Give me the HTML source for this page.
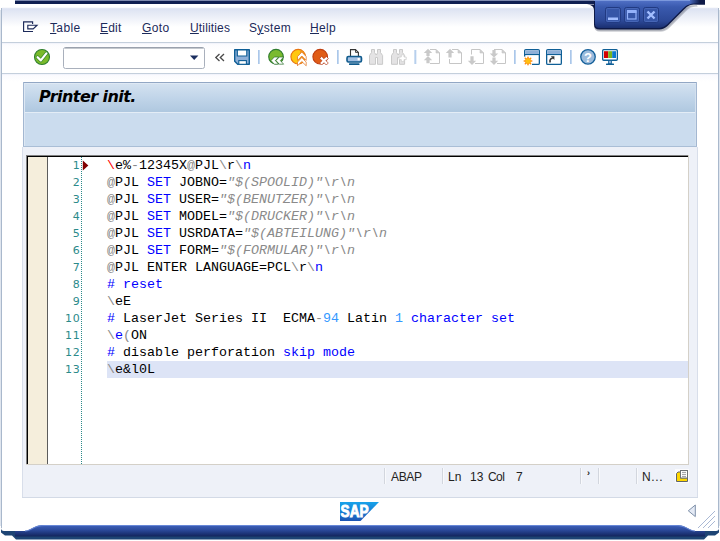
<!DOCTYPE html>
<html>
<head>
<meta charset="utf-8">
<title>Printer init.</title>
<style>
html,body{margin:0;padding:0;background:#fff;}
body{width:720px;height:541px;position:relative;overflow:hidden;font-family:"Liberation Sans",sans-serif;}
.abs{position:absolute;}
#frame{position:absolute;left:0;top:0;width:720px;height:541px;}
.menu{position:absolute;top:20px;height:16px;line-height:16px;font-size:12px;letter-spacing:0.35px;color:#1c2a5a;white-space:nowrap;}
.menu u{text-decoration:underline;text-decoration-thickness:1px;text-underline-offset:0.6px;}
#title{position:absolute;left:39px;top:86px;height:22px;line-height:22px;font-family:"DejaVu Sans","Liberation Sans",sans-serif;font-weight:bold;font-style:italic;font-size:16px;letter-spacing:-0.55px;color:#000;white-space:nowrap;}
#code{position:absolute;left:107px;top:157px;font-family:"Liberation Mono",monospace;font-size:13.333px;line-height:17px;color:#000;white-space:pre;}
#code div{height:17px;}
.g{color:#8a8a8a;}
.b{color:#0000ff;}
.r{color:#ff0000;}
.n{color:#3399ff;}
.s{color:#8a8a8a;font-style:italic;}
#lnum{position:absolute;left:48px;top:157px;width:32.400px;letter-spacing:0.7px;text-align:right;font-family:"DejaVu Sans","Liberation Sans",sans-serif;font-size:11px;line-height:17px;color:#2b8a8a;}
#lnum div{height:17px;}
.st{position:absolute;top:469px;height:16px;line-height:16px;font-size:12px;color:#222;white-space:nowrap;}
.sep{position:absolute;top:468px;width:1px;height:16px;background:#d2d6de;border-right:1px solid #f8f9fc;}
</style>
</head>
<body>
<svg id="frame" width="720" height="541" viewBox="0 0 720 541">
  <defs>
    <linearGradient id="topg" x1="0" y1="0" x2="0" y2="1">
      <stop offset="0" stop-color="#ffffff"/>
      <stop offset="0.10" stop-color="#ffffff"/>
      <stop offset="0.17" stop-color="#dce2f2"/>
      <stop offset="0.30" stop-color="#e2e7f4"/>
      <stop offset="1" stop-color="#ffffff"/>
    </linearGradient>
    <linearGradient id="tabg" x1="0" y1="0" x2="0" y2="1">
      <stop offset="0" stop-color="#5272c8"/>
      <stop offset="0.25" stop-color="#3a5aae"/>
      <stop offset="0.75" stop-color="#2c4896"/>
      <stop offset="1" stop-color="#1a2f70"/>
    </linearGradient>
    <linearGradient id="fadeg" x1="0" y1="0" x2="1" y2="0">
      <stop offset="0" stop-color="#0e1a48" stop-opacity="0"/>
      <stop offset="0.25" stop-color="#0e1a48" stop-opacity="0"/>
      <stop offset="0.75" stop-color="#0e1a48" stop-opacity="1"/>
      <stop offset="1" stop-color="#0e1a48" stop-opacity="1"/>
    </linearGradient>
    <linearGradient id="barg" x1="0" y1="0" x2="0" y2="1">
      <stop offset="0" stop-color="#4668c0"/>
      <stop offset="0.15" stop-color="#3c5eb6"/>
      <stop offset="0.45" stop-color="#2d4c9e"/>
      <stop offset="0.8" stop-color="#1b3274"/>
      <stop offset="1" stop-color="#13245a"/>
    </linearGradient>
    <linearGradient id="tbg" x1="0" y1="0" x2="0" y2="1">
      <stop offset="0" stop-color="#eef0fa"/>
      <stop offset="0.2" stop-color="#fbfbfe"/>
      <stop offset="1" stop-color="#ffffff"/>
    </linearGradient>
  </defs>
  <!-- top navy bar -->
  <rect x="15" y="0" width="690" height="4.500" fill="#0f1f52"/>
  <rect x="15" y="0" width="690" height="1" fill="#7f8bb0"/>
  <!-- bottom shadow -->
  <path d="M1 528 L1 532.500 L5 535.500 L12 535.500 L16 539.500 L704 539.500 L708 535.500 L715 535.500 L719 532.500 L719 528 Z" fill="#1d4474"/>
  <!-- bottom blue bar -->
  <rect x="15" y="524" width="690" height="12.500" fill="url(#barg)"/>
  <!-- window body -->
  <path d="M1 9 Q1 4 6 4 L714 4 Q719 4 719 9 L719 528 Q719 531 716 531 L697 531 C688 531 688 525 676 525 L44 525 C32 525 32 531 23 531 L4 531 Q1 531 1 528 Z" fill="#ffffff"/>
  <rect x="2" y="5" width="716" height="22" fill="url(#topg)"/>
  <path d="M25 531 C33 530.500 33 525.500 45 525.500 L675 525.500 C687 525.500 687 530.500 695 531" fill="none" stroke="#6c8cda" stroke-width="1" opacity="0.900"/>
  <!-- window side borders -->
  <rect x="1" y="8" width="1" height="520" fill="#a9b8cc"/>
  <rect x="0" y="10" width="1" height="516" fill="#dfe5ee"/>
  <rect x="718" y="8" width="1" height="520" fill="#a9b8cc"/>
  <rect x="719" y="10" width="1" height="516" fill="#dfe5ee"/>
  <!-- menu / toolbar separators -->
  <rect x="2" y="42" width="716" height="1" fill="#c4cfdc"/>
  <rect x="2" y="43" width="716" height="8" fill="url(#tbg)"/>
  <rect x="2" y="73" width="716" height="1" fill="#c4cfdc"/>
  <rect x="2" y="74" width="716" height="8" fill="url(#tbg)"/>
  <!-- blue tab with window buttons -->
  <path d="M594 4 L594 25 Q594 30 600 30 L658 30 C665 30 667 28 671 24 L685 10 C689 6 691 5 697 5 L697 4 Z" fill="#5a6070" opacity="0.30" transform="translate(0.500,1.800)"/>
  <path d="M594 4 L594 25 Q594 30 600 30 L658 30 C665 30 667 28 671 24 L685 10 C689 6 691 5 697 5 L697 4 Z" fill="#5a6070" opacity="0.25" transform="translate(0,1)"/>
  <path d="M594 0 L594 24.500 Q594 29.500 599.500 29.500 L657 29.500 C664 29.500 666 27.500 670 23.500 L684 9.500 C688 5.500 690 4.500 696 4.500 L705 4.500 L705 0 Z" fill="#0e1a48"/>
  <path d="M595 0 L595 23.500 Q595 28 600 28 L657 28 C663 28 665 26.500 669 22.500 L683 8.500 C687 4.500 690 3.200 702 3.200 L702 0 Z" fill="url(#tabg)"/>
  <rect x="684" y="0" width="21" height="4.500" fill="url(#fadeg)"/>
  <path d="M587 4.400 Q594.200 4.400 594.200 11 L594.200 4.400 Z" fill="#0e1a48"/>
  <rect x="594" y="0" width="96" height="1" fill="#7b98dc"/>
  <g fill="#3656a8" stroke="#213a82" stroke-width="1">
    <rect x="605.500" y="7.500" width="15" height="15" rx="2"/>
    <rect x="624.500" y="7.500" width="15" height="15" rx="2"/>
    <rect x="643.500" y="7.500" width="15" height="15" rx="2"/>
  </g>
  <g fill="none" stroke="#4f6ebc" stroke-width="1" opacity="0.700">
    <rect x="606.500" y="8.500" width="13" height="13" rx="1"/>
    <rect x="625.500" y="8.500" width="13" height="13" rx="1"/>
    <rect x="644.500" y="8.500" width="13" height="13" rx="1"/>
  </g>
  <rect x="608" y="17.500" width="10" height="2.500" fill="#a3beff"/>
  <rect x="627.500" y="11" width="8.500" height="8" fill="none" stroke="#94b2fa" stroke-width="1.200"/>
  <rect x="627" y="10" width="9.500" height="3" fill="#94b2fa"/>
  <path d="M647.500 11.500 L654.500 18.500 M654.500 11.500 L647.500 18.500" stroke="#a3beff" stroke-width="2.400" fill="none"/>
  <!-- content panel -->
  <defs>
    <linearGradient id="ttl" x1="0" y1="0" x2="0" y2="1">
      <stop offset="0" stop-color="#d6e3f1"/>
      <stop offset="0.5" stop-color="#c1d5e9"/>
      <stop offset="1" stop-color="#aec7df"/>
    </linearGradient>
  </defs>
  <rect x="22" y="82" width="676" height="416" fill="#eef1f8"/>
  <rect x="22" y="147" width="1" height="351" fill="#d8deea"/>
  <rect x="697" y="147" width="1" height="351" fill="#d8deea"/>
  <rect x="22" y="497" width="676" height="1" fill="#d3dae6"/>
  <rect x="22" y="82" width="676" height="65" fill="#ffffff"/>
  <rect x="23" y="82" width="674" height="31" fill="url(#ttl)"/>
  <rect x="24" y="112" width="672" height="1" fill="#e4edf6"/>
  <rect x="24" y="113" width="672" height="33" fill="#cbdcee"/>
  <rect x="24" y="83" width="1" height="63" fill="#dde8f4"/>
  <rect x="695" y="83" width="1" height="63" fill="#d3e0ee"/>
  <rect x="24" y="83" width="672" height="1" fill="#dfe9f4"/>
  <rect x="23" y="82" width="674" height="1" fill="#92a7c4"/>
  <rect x="23" y="82" width="1" height="65" fill="#a3b7d1"/>
  <rect x="696" y="82" width="1" height="65" fill="#a3b7d1"/>
  <rect x="23" y="146" width="674" height="1" fill="#aabed6"/>
  <!-- editor -->
  <rect x="26" y="155" width="663" height="310" fill="#d4d0c8"/>
  <rect x="26" y="155" width="662" height="309" fill="#808080"/>
  <rect x="27" y="156" width="661" height="308" fill="#000000"/>
  <rect x="28" y="157" width="660" height="307" fill="#ffffff"/>
  <rect x="28" y="157" width="19" height="307" fill="#f5eedc"/>
  <rect x="47" y="157" width="1" height="307" fill="#5c5c5c"/>
  <line x1="81.500" y1="157" x2="81.500" y2="464" stroke="#2b8a8a" stroke-width="1" stroke-dasharray="1,1"/>
  <rect x="107" y="361" width="581" height="17" fill="#dde4f6"/>
  <path d="M82.800 160.500 L88.400 165.500 L82.800 170.500 Z" fill="#800000"/>
  <!-- SAP logo -->
  <defs>
    <linearGradient id="sapg" x1="0" y1="0" x2="0" y2="1">
      <stop offset="0" stop-color="#17a2ea"/>
      <stop offset="0.5" stop-color="#1a80d4"/>
      <stop offset="1" stop-color="#1c54b4"/>
    </linearGradient>
  </defs>
  <path d="M340 502 L379 502 L360.500 521 L340 521 Z" fill="url(#sapg)"/>
  <text x="340.600" y="517" font-family="Liberation Sans, sans-serif" font-weight="bold" font-size="16.500" fill="#ffffff" stroke="#ffffff" stroke-width="0.900" textLength="28" lengthAdjust="spacingAndGlyphs">SAP</text>
  <!-- status icon -->
  <rect x="675" y="469" width="14" height="14" fill="#fbfbfd"/>
  <path d="M676.500 481.500 L676.500 473.500 L678 472 L680.500 472 L680.500 478 L687.500 478 L687.500 481.500 Z" fill="#ffd700" stroke="#60646a" stroke-width="1"/>
  <rect x="680.500" y="470.500" width="7" height="7.500" fill="#ffffff" stroke="#6e7276" stroke-width="1"/>
  <path d="M682 472.400 L686 472.400 M682 474.400 L686 474.400 M682 476.400 L686 476.400" stroke="#808488" stroke-width="0.800"/>
  <!-- resize grip -->
  <g stroke="#a9b8d4" stroke-width="1">
    <line x1="698" y1="528" x2="715" y2="511"/>
    <line x1="703" y1="528" x2="715" y2="516"/>
    <line x1="708" y1="528" x2="715" y2="521"/>
  </g>
  <path d="M695.300 505 L695.300 516.600 L688.300 510.800 Z" fill="#e4eaf5" stroke="#7d8fa8" stroke-width="1"/>
</svg>

<svg id="tools" class="abs" style="left:0;top:0" width="720" height="541" viewBox="0 0 720 541">
  <defs>
    <linearGradient id="sepg" x1="0" y1="0" x2="1" y2="0">
      <stop offset="0" stop-color="#9fbfe6"/><stop offset="1" stop-color="#cfe0f4"/>
    </linearGradient>
    <linearGradient id="grn" x1="0" y1="0" x2="0" y2="1">
      <stop offset="0" stop-color="#86c03a"/><stop offset="1" stop-color="#5aa024"/>
    </linearGradient>
  </defs>
  <!-- menu icon -->
  <g fill="none" stroke="#1c2a5a" stroke-width="1.150">
    <path d="M32.600 24 L32.600 21.800 L23.600 21.800 L23.600 31.500 L33 31.500"/>
    <path d="M27.800 25.200 L37 25.200 L33.200 28.800 L27.800 28.800 Z"/>
  </g>
  <!-- check icon -->
  <circle cx="42" cy="57" r="7.500" fill="#7aba2a" stroke="#2e7e2e" stroke-width="1.100"/>
  <path d="M37.600 57.200 L40.800 60.400 L46.400 53.400" fill="none" stroke="#2e7e2e" stroke-width="3.600" stroke-linecap="round" stroke-linejoin="round" opacity="0.800"/>
  <path d="M37.600 57.200 L40.800 60.400 L46.400 53.400" fill="none" stroke="#ffffff" stroke-width="2.200" stroke-linecap="round" stroke-linejoin="round"/>
  <!-- command field -->
  <rect x="63.500" y="47.500" width="141" height="21" rx="2" fill="#ffffff" stroke="#a9b0bc"/>
  <path d="M65 48 L203 48" stroke="#8a929e" stroke-width="1"/>
  <path d="M190 55.500 L198.400 55.500 L194.200 60 Z" fill="#1c2f60"/>
  <!-- « -->
  <path d="M219.500 54 L215.800 57.500 L219.500 61 M224 54 L220.300 57.500 L224 61" fill="none" stroke="#4a4a4a" stroke-width="1.300"/>
  <!-- save -->
  <path d="M234.700 49.700 L249.300 49.700 L249.300 64.300 L237.700 64.300 L234.700 61.300 Z" fill="#8fb0d8" stroke="#0f5f96" stroke-width="1.400" stroke-linejoin="round"/>
  <path d="M237.300 50 L246.800 50 L246.800 56 L237.300 56 Z" fill="#ffffff" stroke="#0f5f96" stroke-width="1.200"/>
  <rect x="238.800" y="60.600" width="7.600" height="3.700" fill="#ffffff" stroke="#0f5f96" stroke-width="1.100"/>
  <!-- separators -->
  <g>
    <rect x="258" y="50" width="2" height="14" fill="url(#sepg)"/>
    <rect x="337" y="50" width="2" height="14" fill="url(#sepg)"/>
    <rect x="414.500" y="50" width="2" height="14" fill="url(#sepg)"/>
    <rect x="514" y="50" width="2" height="14" fill="url(#sepg)"/>
    <rect x="570" y="50" width="2" height="14" fill="url(#sepg)"/>
  </g>
  <!-- back (green) -->
  <circle cx="276" cy="56.700" r="7.300" fill="#7aba2e" stroke="#2f7c2e" stroke-width="1.100"/>
  <path d="M274.300 57 L278.600 57 L275.400 60.600 L278.600 64.200 L274.300 64.200 L271 60.600 Z M279.300 57 L283.600 57 L280.400 60.600 L283.600 64.200 L279.300 64.200 L276 60.600 Z" fill="#ffffff" stroke="#2a702a" stroke-width="0.700" stroke-linejoin="miter"/>
  <!-- exit (yellow) -->
  <defs><clipPath id="ycl"><rect x="300" y="48" width="10" height="18"/></clipPath></defs>
  <circle cx="298.200" cy="56.700" r="7.300" fill="#ffc810" stroke="#e87410" stroke-width="1.100"/>
  <circle cx="298.200" cy="56.700" r="6.800" fill="#f39a1c" clip-path="url(#ycl)"/>
  <path d="M301.800 52 L306.200 56.600 L306.200 60.400 L301.800 56 L297.500 60.400 L297.500 56.600 Z M301.800 57.500 L306.200 62.100 L306.200 65.800 L301.800 61.500 L297.500 65.800 L297.500 62.100 Z" fill="#ffffff" stroke="#e06c10" stroke-width="0.700"/>
  <!-- cancel (red) -->
  <circle cx="320.200" cy="56.700" r="7.300" fill="#e05c16" stroke="#c03e10" stroke-width="1.100"/>
  <path d="M319.700 58.400 L321.700 56.400 L324 58.700 L326.300 56.400 L328.300 58.400 L326 60.700 L328.300 63 L326.300 65 L324 62.700 L321.700 65 L319.700 63 L322 60.700 Z" fill="#ffffff" stroke="#b03410" stroke-width="0.700"/>
  <!-- print -->
  <path d="M350.500 56 L350.500 49.600 L355.500 49.600 L358.400 52.400 L358.400 56" fill="#ffffff" stroke="#333333" stroke-width="1.100"/>
  <path d="M355.500 49.600 L355.500 52.400 L358.400 52.400" fill="none" stroke="#333333" stroke-width="0.900"/>
  <rect x="347" y="56.500" width="14.500" height="5.500" rx="1.500" fill="#a4c0e2" stroke="#0f5a8c" stroke-width="1.600"/>
  <rect x="357.600" y="58" width="2.200" height="2.400" fill="#ffffff"/>
  <rect x="349" y="63.200" width="10.500" height="1.800" rx="0.600" fill="#0f5a8c"/>
  <!-- binoculars (disabled) -->
  <g fill="#e4e3e4" stroke="#c9c9c9" stroke-width="1" stroke-linejoin="round">
    <path d="M371.5 49.5 L374.5 49.5 L374.5 52.5 L375.5 54 L375.5 54.5 L377 54.5 L377 54 L377.5 52.5 L377.5 49.5 L380.5 49.5 L380.5 52.5 L382.6 55.5 L382.6 64.3 L377.5 64.3 L377.5 57.5 L375.5 57.5 L375.5 64.3 L369.5 64.3 L369.5 55.5 L371.5 52.5 Z"/>
    <path d="M393.5 49.5 L396.5 49.5 L396.5 52.5 L397.5 54 L397.5 54.5 L399 54.5 L399 54 L399.5 52.5 L399.5 49.5 L402.5 49.5 L402.5 52.5 L404.6 55.5 L404.6 64.3 L399.5 64.3 L399.5 57.5 L397.5 57.5 L397.5 64.3 L391.5 64.3 L391.5 55.5 L393.5 52.5 Z"/>
  </g>
  <path d="M401.300 54.800 L404 54.800 L404 57 L406.200 57 L406.200 59.600 L404 59.600 L404 61.600 L401.300 61.600 L401.300 59.600 L399 59.600 L399 57 L401.300 57 Z" fill="#ffffff" stroke="#d4d4d4" stroke-width="0.900"/>
  <!-- page icons (disabled) -->
  <g fill="none" stroke="#c6c6c6" stroke-width="1">
    <path d="M430 49.500 L436 49.500 L439.500 53 L439.500 63.500 L430 63.500"/>
    <path d="M449.500 59 L449.500 63.500 L461.500 63.500 L461.500 53 L458 49.500 L452 49.500"/>
    <path d="M471.500 54.500 L471.500 49.500 L480 49.500 L483.500 53 L483.500 63.500 L475 63.500"/>
    <path d="M494 49.500 L502 49.500 L505.500 53 L505.500 63.500 L497 63.500"/>
  </g>
  <g fill="#cfcfcf" stroke="#c6c6c6" stroke-width="0.600">
    <path d="M436 49.500 L439.500 53 L436 53 Z"/>
    <path d="M458 49.500 L461.500 53 L458 53 Z"/>
    <path d="M480 49.500 L483.500 53 L480 53 Z"/>
    <path d="M502 49.500 L505.500 53 L502 53 Z"/>
  </g>
  <g fill="#c9c9c9">
    <path d="M428 48.8 L432.2 53 L429.6 53 L429.6 56 L426.4 56 L426.4 53 L423.8 53 Z"/>
    <path d="M428 56 L432.2 60.2 L429.6 60.2 L429.6 63.2 L426.4 63.2 L426.4 60.2 L423.8 60.2 Z"/>
    <path d="M450 48.8 L454.2 53 L451.6 53 L451.6 57.5 L448.4 57.5 L448.4 53 L445.8 53 Z"/>
    <path d="M472 65 L476.2 60.8 L473.6 60.8 L473.6 56.3 L470.4 56.3 L470.4 60.8 L467.8 60.8 Z"/>
    <path d="M494 57.6 L498.2 53.4 L495.6 53.4 L495.6 50 L492.4 50 L492.4 53.4 L489.8 53.4 Z"/>
    <path d="M494 65 L498.2 60.8 L495.6 60.8 L495.6 57.6 L492.4 57.6 L492.4 60.8 L489.8 60.8 Z"/>
  </g>
  <!-- new session -->
  <rect x="524.650" y="49.650" width="14.700" height="14.700" rx="1.200" fill="#ffffff" stroke="#0f5f96" stroke-width="1.300"/>
  <rect x="525.300" y="50.300" width="13.400" height="3.700" fill="#8fb0d8"/>
  <rect x="524.650" y="54" width="14.700" height="1.100" fill="#0f5f96"/>
  <rect x="523" y="56.600" width="9" height="9" fill="#ffffff"/>
  <g stroke="#ff8c10" stroke-width="1.500" stroke-linecap="round">
    <path d="M528 57.200 L528 64.800 M524.200 61 L531.800 61 M525.300 58.300 L530.700 63.700 M530.700 58.300 L525.300 63.700"/>
  </g>
  <circle cx="528" cy="61" r="2.700" fill="#ffc010"/>
  <circle cx="528" cy="61" r="2.700" fill="none" stroke="#ffa010" stroke-width="0.600"/>
  <!-- shortcut -->
  <rect x="546.650" y="49.650" width="14.700" height="14.700" rx="1.200" fill="#ffffff" stroke="#0f5f96" stroke-width="1.300"/>
  <rect x="547.300" y="50.300" width="13.400" height="3.700" fill="#8fb0d8"/>
  <rect x="546.650" y="54" width="14.700" height="1.100" fill="#0f5f96"/>
  <path d="M550.200 62.600 C549.300 59.800 550.800 58.300 552.800 58.300" fill="none" stroke="#333333" stroke-width="1.600"/>
  <path d="M550.800 56.300 L554.400 56.300 L554.400 60 Z" fill="#333333"/>
  <!-- help -->
  <circle cx="588" cy="56.850" r="7.250" fill="#9bbbdc" stroke="#15609a" stroke-width="1.300"/>
  <text x="588" y="61.600" text-anchor="middle" font-family="Liberation Sans, sans-serif" font-weight="bold" font-size="13" fill="#ffffff">?</text>
  <!-- monitor -->
  <rect x="602.650" y="49.650" width="14.700" height="10.600" rx="1" fill="#ffffff" stroke="#0f5f96" stroke-width="1.300"/>
  <rect x="604" y="51.200" width="4.200" height="6.800" fill="#d40000"/>
  <rect x="608.200" y="51.200" width="4" height="6.800" fill="#78b41e"/>
  <rect x="612.200" y="51.200" width="3.800" height="6.800" fill="#0a78d0"/>
  <rect x="608.600" y="60.500" width="2.800" height="3.200" fill="#8fb0d8" stroke="#0f5f96" stroke-width="0.800"/>
  <rect x="606" y="63.400" width="8" height="1.500" rx="0.500" fill="#0f5f96"/>
</svg>

<div class="menu" style="left:50px"><u>T</u>able</div>
<div class="menu" style="left:100px;letter-spacing:0.2px"><u>E</u>dit</div>
<div class="menu" style="left:142px"><u>G</u>oto</div>
<div class="menu" style="left:190px;letter-spacing:0.15px"><u>U</u>tilities</div>
<div class="menu" style="left:249px">S<u>y</u>stem</div>
<div class="menu" style="left:310px"><u>H</u>elp</div>

<div id="title">Printer init.</div>

<div id="lnum"><div>1</div><div>2</div><div>3</div><div>4</div><div>5</div><div>6</div><div>7</div><div>8</div><div>9</div><div>10</div><div>11</div><div>12</div><div>13</div></div>

<div id="code"><div><span class="r">\</span>e%<span class="g">-</span>12345X<span class="g">@</span>PJL<span class="g">\</span>r<span class="g">\</span><span class="b">n</span></div><div><span class="g">@</span>PJL <span class="b">SET</span> JOBNO=<span class="s">"$(SPOOLID)"\r\n</span></div><div><span class="g">@</span>PJL <span class="b">SET</span> USER=<span class="s">"$(BENUTZER)"\r\n</span></div><div><span class="g">@</span>PJL <span class="b">SET</span> MODEL=<span class="s">"$(DRUCKER)"\r\n</span></div><div><span class="g">@</span>PJL <span class="b">SET</span> USRDATA=<span class="s">"$(ABTEILUNG)"\r\n</span></div><div><span class="g">@</span>PJL <span class="b">SET</span> FORM=<span class="s">"$(FORMULAR)"\r\n</span></div><div><span class="g">@</span>PJL ENTER LANGUAGE=PCL<span class="g">\</span>r<span class="g">\</span><span class="b">n</span></div><div><span class="b"># reset</span></div><div><span class="g">\</span>eE</div><div><span class="b">#</span> LaserJet Series II  ECMA<span class="g">-</span><span class="n">94</span> Latin <span class="n">1</span> <span class="b">character set</span></div><div><span class="g">\</span><span class="b">e</span><span class="g">(</span>ON</div><div><span class="b">#</span> disable perforation <span class="b">skip mode</span></div><div><span class="g">\</span>e&amp;l0L</div></div>

<div class="sep" style="left:384px"></div>
<div class="st" style="left:391px;letter-spacing:-0.35px">ABAP</div>
<div class="sep" style="left:442px"></div>
<div class="st" style="left:448px">Ln</div>
<div class="st" style="left:470px">13</div>
<div class="st" style="left:488px;letter-spacing:-0.6px">Col</div>
<div class="st" style="left:516px">7</div>
<div class="sep" style="left:580px"></div>
<div class="st" style="left:587px;top:465px;font-size:9px;font-weight:bold">›</div>
<div class="sep" style="left:598px"></div>
<div class="sep" style="left:636px"></div>
<div class="st" style="left:642px;letter-spacing:0.6px">N...</div>
</body>
</html>
